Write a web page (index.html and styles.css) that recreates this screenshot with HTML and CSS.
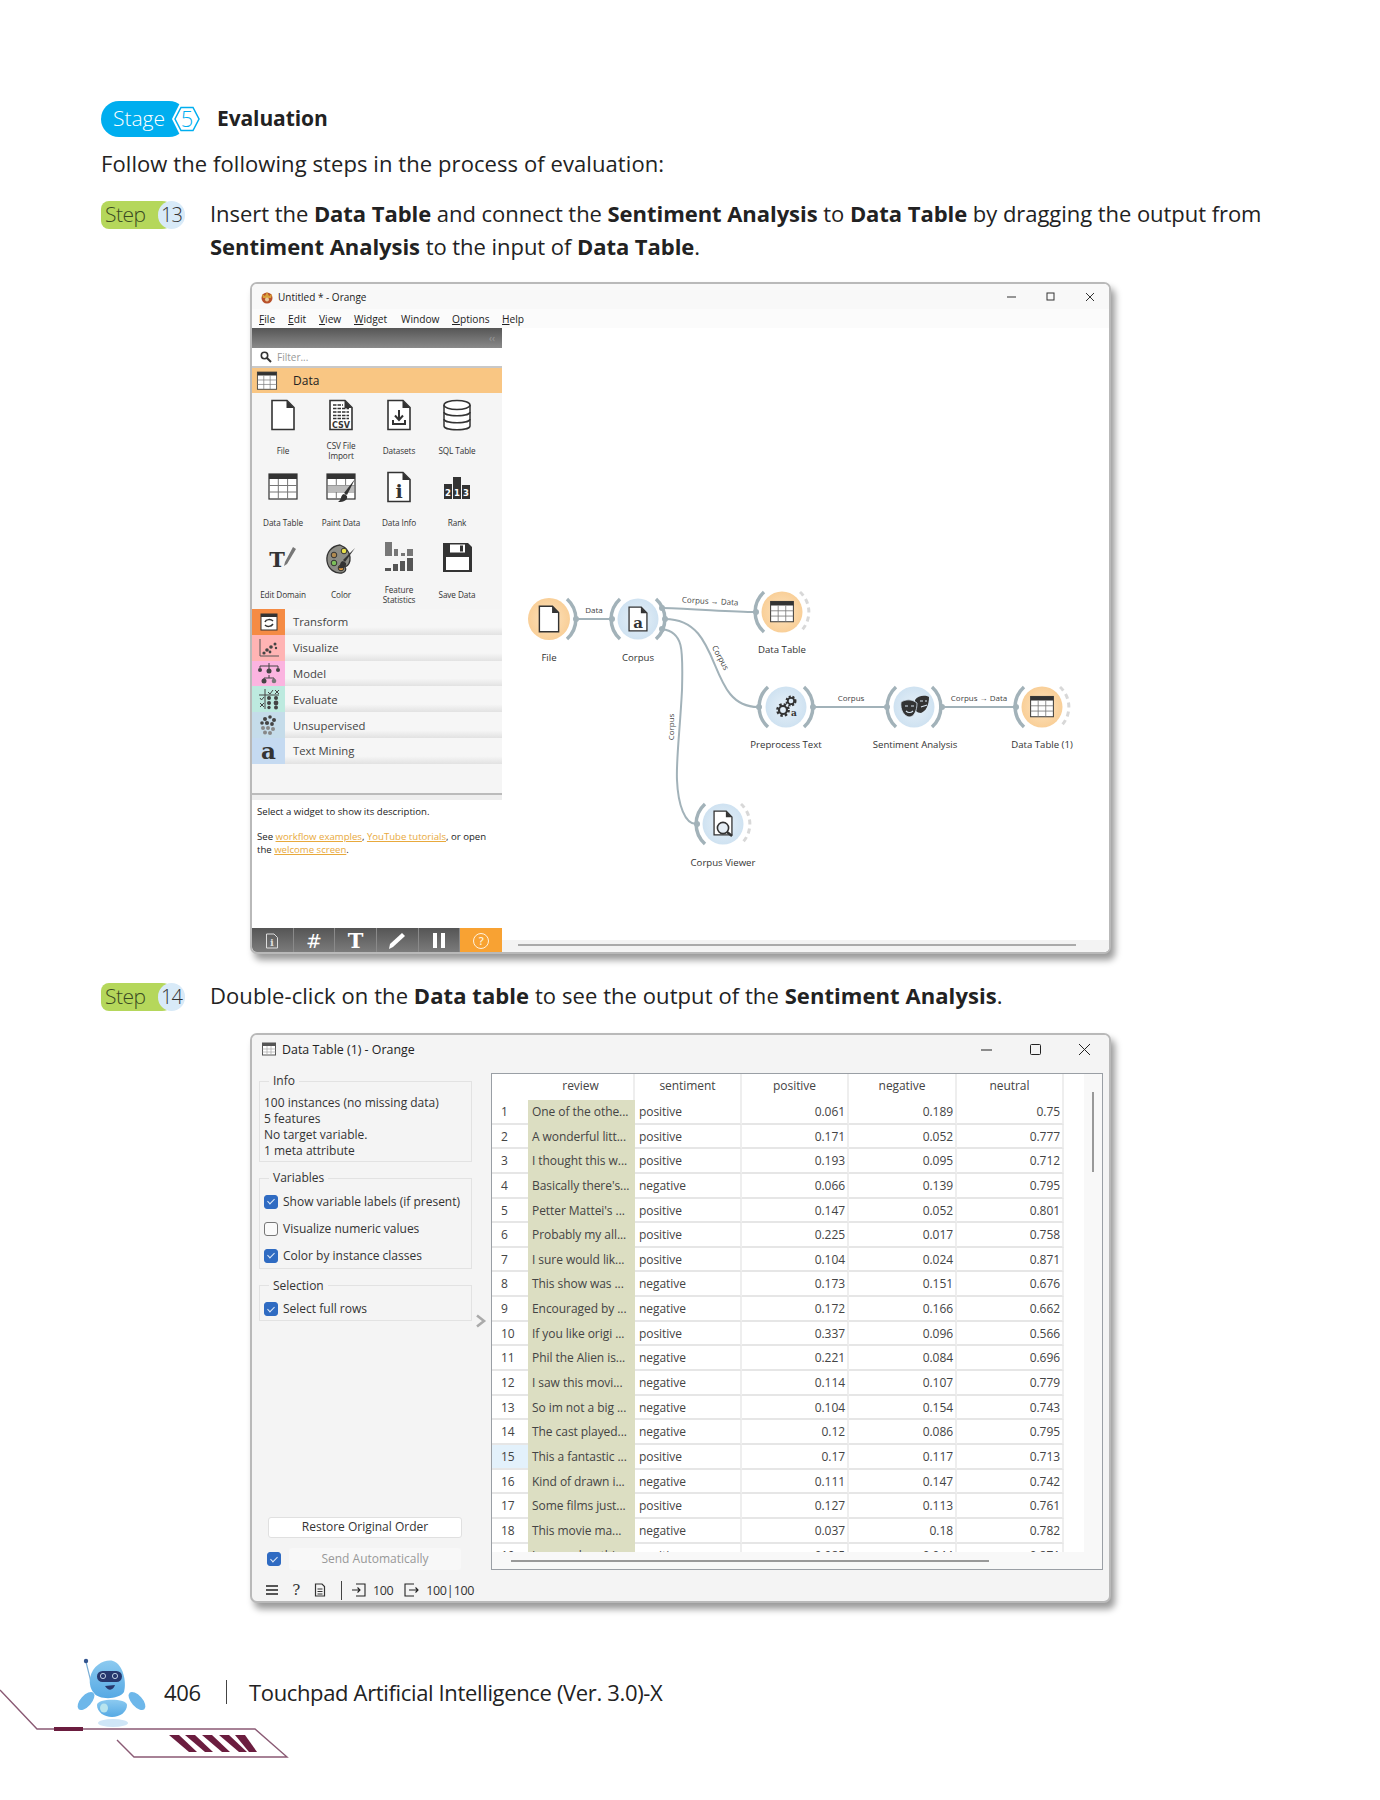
FILE: index.html
```html
<!DOCTYPE html>
<html>
<head>
  <meta charset="UTF-8" />
  <title>Stage 5 Evaluation</title>
  <link rel="stylesheet" href="styles.css">
</head>
<body>

<svg class="defs">
  <symbol id="doc" viewBox="0 0 32 32">
    <path d="M5 1.5H20L27 8.5V30.5H5Z" fill="#fff" stroke="#333" stroke-width="1.6"/>
    <path d="M19.5 1.5V9H27Z" fill="#333"/>
  </symbol>
  <symbol id="table" viewBox="0 0 32 32">
    <rect x="2" y="3" width="28" height="25" fill="#fff" stroke="#333" stroke-width="1.2"/>
    <rect x="2" y="3" width="28" height="5" fill="#333"/>
    <path d="M2 14.5H30M2 21H30M11.3 8V28M20.6 8V28" stroke="#777" stroke-width="1"/>
  </symbol>
</svg>

<div class="page">

  <div class="stage-row">
    <span class="stage-pill">Stage</span>
    <svg class="stage-hex" width="32" height="34" viewBox="0 0 32 34">
      <path d="M8.5 2H23.5L31 17L23.5 32H8.5L1 17Z" fill="#fff"/>
      <path d="M10 5.5H22L28 17L22 28.5H10L4 17Z" fill="#fff" stroke="#00aeef" stroke-width="1.5"/>
      <text x="16" y="24.5" text-anchor="middle" class="hex-num">5</text>
    </svg>
    <span class="stage-title">Evaluation</span>
  </div>

  <p class="lead">Follow the following steps in the process of evaluation:</p>

  <div class="step-row step-one">
    <div class="step-badge"><span class="step-pill">Step</span><span class="step-num">13</span></div>
    <p class="step-text">Insert the <b>Data Table</b> and connect the <b>Sentiment Analysis</b> to <b>Data Table</b> by dragging the output from<br><b>Sentiment Analysis</b> to the input of <b>Data Table</b>.</p>
  </div>

  <!-- orange canvas window -->
  <div class="window win-canvas">
    <div class="titlebar">
      <svg class="app-icon" width="14" height="14" viewBox="0 0 14 14">
        <circle cx="7" cy="8" r="5.5" fill="#b8502a"/>
        <path d="M2 4L5 6L7 2L9 6L12 4L11 8H3Z" fill="#d9a13a"/>
        <circle cx="7" cy="9.5" r="2" fill="#e9c79a"/>
      </svg>
      <span class="title-text">Untitled * - Orange</span>
      <div class="win-btns">
        <svg width="12" height="12" viewBox="0 0 12 12"><path d="M1 6H10" stroke="#333"/></svg>
        <svg width="12" height="12" viewBox="0 0 12 12"><rect x="2" y="2" width="7" height="7" fill="none" stroke="#333"/></svg>
        <svg width="12" height="12" viewBox="0 0 12 12"><path d="M2 2L10 10M10 2L2 10" stroke="#333"/></svg>
      </div>
    </div>
    <div class="menubar">
      <span><u>F</u>ile</span>
      <span><u>E</u>dit</span>
      <span><u>V</u>iew</span>
      <span><u>W</u>idget</span>
      <span>Window</span>
      <span><u>O</u>ptions</span>
      <span><u>H</u>elp</span>
    </div>

    <div class="win-body">
      <div class="sidebar">
        <div class="dock-bar"><span class="dock-arrows">‹‹</span></div>
        <div class="filter">
          <svg width="12" height="12" viewBox="0 0 12 12"><circle cx="4.5" cy="4.5" r="3.2" fill="none" stroke="#333" stroke-width="1.6"/><path d="M7 7L11 11" stroke="#333" stroke-width="2"/></svg>
          <span>Filter...</span>
        </div>
        <div class="cat-open">
          <svg width="22" height="22" viewBox="0 0 32 32"><use href="#table"/></svg>
          <span>Data</span>
        </div>

        <div class="widgets">
          <div class="widget">
            <svg width="32" height="32"><use href="#doc"/></svg>
            <span class="w-label">File</span>
          </div>
          <div class="widget">
            <svg width="32" height="32" viewBox="0 0 32 32">
              <path d="M5 1.5H20L27 8.5V30.5H5Z" fill="#fff" stroke="#333" stroke-width="1.6"/>
              <path d="M19.5 1.5V9H27Z" fill="#333"/>
              <path d="M8 6H18M8 9.5H24M8 13H24M8 16.5H24M8 19.5H24" stroke="#333" stroke-width="1.6" stroke-dasharray="3.5 1"/>
              <text x="16" y="29" text-anchor="middle" class="csv-text">CSV</text>
            </svg>
            <span class="w-label">CSV File<br>Import</span>
          </div>
          <div class="widget">
            <svg width="32" height="32"><use href="#doc"/><path d="M16 11V20M12 16.5L16 21L20 16.5M10 21V25H22V21" fill="none" stroke="#333" stroke-width="2"/></svg>
            <span class="w-label">Datasets</span>
          </div>
          <div class="widget">
            <svg width="32" height="32" viewBox="0 0 32 32">
              <path d="M3 6V27C3 32 29 32 29 27V6" fill="#fff" stroke="#333" stroke-width="1.5"/>
              <ellipse cx="16" cy="6" rx="13" ry="4.5" fill="#fff" stroke="#333" stroke-width="1.5"/>
              <path d="M3 13C3 18 29 18 29 13M3 20C3 25 29 25 29 20" fill="none" stroke="#333" stroke-width="1.5"/>
            </svg>
            <span class="w-label">SQL Table</span>
          </div>

          <div class="widget">
            <svg width="32" height="32"><use href="#table"/></svg>
            <span class="w-label">Data Table</span>
          </div>
          <div class="widget">
            <svg width="32" height="32" viewBox="0 0 32 32">
              <use href="#table" width="32" height="32"/>
              <rect x="3" y="14.5" width="26" height="6.5" fill="#bbb"/>
              <path d="M30 8L22 24L19 22Z" fill="#333"/>
              <path d="M19 23C15 24 17 29 13 31C19 31 23 29 22 25Z" fill="#333"/>
            </svg>
            <span class="w-label">Paint Data</span>
          </div>
          <div class="widget">
            <svg width="32" height="32"><use href="#doc"/><text x="16" y="27" text-anchor="middle" class="info-i">i</text></svg>
            <span class="w-label">Data Info</span>
          </div>
          <div class="widget">
            <svg width="32" height="32" viewBox="0 0 32 32">
              <rect x="3" y="13" width="8" height="15" fill="#333"/>
              <rect x="12" y="6" width="8" height="22" fill="#333"/>
              <rect x="21" y="14" width="8" height="14" fill="#333"/>
              <text x="7" y="25" text-anchor="middle" class="rank-n">2</text>
              <text x="16" y="25" text-anchor="middle" class="rank-n">1</text>
              <text x="25" y="25" text-anchor="middle" class="rank-n">3</text>
            </svg>
            <span class="w-label">Rank</span>
          </div>

          <div class="widget">
            <svg width="32" height="32" viewBox="0 0 32 32">
              <text x="10" y="24" text-anchor="middle" class="edit-t">T</text>
              <path d="M29 6L20 21L17 23L18 19L26 4Z" fill="#777"/>
            </svg>
            <span class="w-label">Edit Domain</span>
          </div>
          <div class="widget">
            <svg width="32" height="32" viewBox="0 0 32 32">
              <path d="M15 2C6 3 1 10 2 18C3 26 10 31 17 30C20 29 22 27 20 24C27 22 28 7 15 2Z" fill="#8d8d86" stroke="#333" stroke-width="1.3"/>
              <circle cx="19" cy="8" r="2.8" fill="#e8e04a" stroke="#333"/>
              <circle cx="9" cy="12" r="2.8" fill="#b08a50" stroke="#333"/>
              <circle cx="9" cy="20" r="2.8" fill="#7cc05a" stroke="#333"/>
              <circle cx="16" cy="25" r="2.8" fill="#e39a3c" stroke="#333"/>
              <path d="M30 5L20 19L18 17Z" fill="#333"/>
              <path d="M18 18C14 19 16 23 13 25C18 26 22 24 21 20Z" fill="#333"/>
            </svg>
            <span class="w-label">Color</span>
          </div>
          <div class="widget">
            <svg width="32" height="32" viewBox="0 0 32 32" class="w-up">
              <path d="M2 0H9V14H2ZM11 7H15V14H11ZM18 11H22V14H18ZM24 7H30V14H24Z" fill="#777"/>
              <path d="M2 29H8V26H2ZM10 29H15V22H10ZM17 29H22V19H17ZM24 29H30V16H24Z" fill="#555"/>
            </svg>
            <span class="w-label">Feature<br>Statistics</span>
          </div>
          <div class="widget">
            <svg width="32" height="32" viewBox="0 0 32 32" class="w-up">
              <path d="M2 1H27L31 5V30H2Z" fill="#333"/>
              <rect x="9" y="2.5" width="15" height="8" fill="#fff"/>
              <rect x="19" y="3.5" width="3" height="6" fill="#333"/>
              <rect x="5" y="15" width="23" height="13" fill="#fff"/>
            </svg>
            <span class="w-label">Save Data</span>
          </div>
        </div>

        <div class="cat">
          <span class="cat-icon ic-transform">
            <svg width="20" height="20" viewBox="0 0 20 20"><rect x="2" y="2" width="16" height="16" fill="#fff" stroke="#333"/><rect x="2" y="2" width="16" height="3" fill="#333"/><path d="M6 10C7 7 12 7 14 9M14 12C12 15 8 15 6 13" fill="none" stroke="#333" stroke-width="1.5"/></svg>
          </span>
          <span class="cat-name">Transform</span>
        </div>
        <div class="cat">
          <span class="cat-icon ic-visualize">
            <svg width="22" height="22" viewBox="0 0 22 22"><path d="M2 2V19H21" fill="none" stroke="#555"/><g fill="#444"><circle cx="6" cy="16" r="1.6"/><circle cx="9" cy="13" r="1.8"/><circle cx="12" cy="15" r="1.4"/><circle cx="13" cy="10" r="1.8"/><circle cx="17" cy="7" r="1.5"/><circle cx="18" cy="11" r="1.2"/></g></svg>
          </span>
          <span class="cat-name">Visualize</span>
        </div>
        <div class="cat">
          <span class="cat-icon ic-model">
            <svg width="24" height="22" viewBox="0 0 24 22"><path d="M3 6V4H21V6M12 1V9M12 13V16M7 19V16H17V19" fill="none" stroke="#444"/><g fill="#444"><circle cx="3" cy="8" r="2"/><circle cx="12" cy="9" r="2.5"/><circle cx="21" cy="8" r="2"/><circle cx="7" cy="19" r="2.5"/><circle cx="17" cy="19" r="2.3" fill="#777"/></g></svg>
          </span>
          <span class="cat-name">Model</span>
        </div>
        <div class="cat">
          <span class="cat-icon ic-evaluate">
            <svg width="22" height="22" viewBox="0 0 22 22"><path d="M1 7H21M7 1V21" stroke="#444"/><path d="M10 4L12 6L15 2M17 2L21 6M21 2L17 6M2 10L3.5 12L6 9M2 15L6 19M6 15L2 19" fill="none" stroke="#444"/><g fill="#444"><circle cx="11" cy="10" r="2"/><circle cx="18" cy="10" r="2"/><circle cx="11" cy="15" r="2"/><circle cx="18" cy="15" r="2.4"/><circle cx="11" cy="19.5" r="1.7"/><circle cx="18" cy="19.5" r="2"/></g></svg>
          </span>
          <span class="cat-name">Evaluate</span>
        </div>
        <div class="cat">
          <span class="cat-icon ic-unsup">
            <svg width="22" height="22" viewBox="0 0 22 22"><g fill="#444"><circle cx="7" cy="5" r="2"/><circle cx="12" cy="3" r="1.8"/><circle cx="16" cy="6" r="2"/><circle cx="4" cy="9" r="1.8"/><circle cx="9" cy="9" r="2.1"/><circle cx="14" cy="10" r="1.9"/></g><g fill="#888"><circle cx="5" cy="14" r="2"/><circle cx="10" cy="14" r="2"/><circle cx="15" cy="15" r="2"/><circle cx="7" cy="18.5" r="2"/><circle cx="12" cy="19" r="2"/></g></svg>
          </span>
          <span class="cat-name">Unsupervised</span>
        </div>
        <div class="cat">
          <span class="cat-icon ic-text"><span class="big-a">a</span></span>
          <span class="cat-name">Text Mining</span>
        </div>

        <div class="side-gap"></div>
        <div class="side-split"></div>
        <div class="desc">
          <p>Select a widget to show its description.</p>
          <p>See <a>workflow examples</a>, <a>YouTube tutorials</a>, or open<br>the <a>welcome screen</a>.</p>
        </div>
        <div class="toolbar">
          <span class="tool"><svg width="14" height="16" viewBox="0 0 14 16"><path d="M1.5 1H9L12.5 4.5V15H1.5Z" fill="none" stroke="#ddd"/><text x="7" y="13" text-anchor="middle" class="tool-i">i</text></svg></span>
          <span class="tool tool-hash">#</span>
          <span class="tool tool-t">T</span>
          <span class="tool"><svg width="20" height="18" viewBox="0 0 20 18"><path d="M15 1L18 4L6 15L2 17L3 12Z" fill="#fff"/></svg></span>
          <span class="tool"><span class="pause"></span><span class="pause"></span></span>
          <span class="tool tool-help"><span class="help-ring">?</span></span>
        </div>
      </div>

      <div class="canvas">
        <svg width="607" height="625" viewBox="502 328 607 625">
          <defs>
            <path id="arc-l" d="M-18 -20A27 27 0 0 0 -18 20" fill="none" stroke="#a2b2b9" stroke-width="3.5"/>
            <path id="arc-r" d="M18 -20A27 27 0 0 1 18 20" fill="none" stroke="#a2b2b9" stroke-width="3.5"/>
            <path id="arc-d" d="M18 -20A27 27 0 0 1 18 20" fill="none" stroke="#d8d8d8" stroke-width="3" stroke-dasharray="5 4"/>
            <radialGradient id="orange-fill"><stop offset="0" stop-color="#fde3be"/><stop offset="1" stop-color="#f9cf98"/></radialGradient>
            <radialGradient id="blue-fill"><stop offset="0" stop-color="#e6f0f8"/><stop offset="1" stop-color="#cfe2f1"/></radialGradient>
          </defs>

          <g fill="none" stroke="#a2b2b9" stroke-width="2">
            <path d="M576 619H612"/>
            <path d="M662 608C700 609 730 612 756 612"/>
            <path d="M665 619C725 619 705 707 758 707"/>
            <path d="M662 629C684 632 683 650 682 690C680 730 676 760 677 780C678 805 685 824 696 824"/>
            <path d="M814 707H887"/>
            <path d="M943 707H1016"/>
          </g>
          <g fill="#a2b2b9">
            <circle cx="576" cy="619" r="3"/><circle cx="612" cy="619" r="3"/>
            <circle cx="662" cy="608" r="3"/><circle cx="665" cy="619" r="3"/><circle cx="662" cy="629" r="3"/>
            <circle cx="756" cy="612" r="3"/><circle cx="759" cy="707" r="3"/><circle cx="813" cy="707" r="3"/>
            <circle cx="887" cy="707" r="3"/><circle cx="942" cy="707" r="3"/><circle cx="1016" cy="707" r="3"/>
            <circle cx="697" cy="824" r="3"/>
          </g>

          <!-- File -->
          <g transform="translate(549 619)">
            <circle r="21" fill="url(#orange-fill)"/><use href="#arc-r"/>
            <svg x="-14" y="-14" width="28" height="28"><use href="#doc"/></svg>
          </g>
          <!-- Corpus -->
          <g transform="translate(638 619)">
            <circle r="20.5" fill="url(#blue-fill)"/><use href="#arc-l"/><use href="#arc-r"/>
            <svg x="-13" y="-13" width="26" height="26"><use href="#doc"/><text x="13" y="21.5" text-anchor="middle" class="node-a">a</text></svg>
          </g>
          <!-- Data Table -->
          <g transform="translate(782 612)">
            <circle r="20.5" fill="url(#orange-fill)"/><use href="#arc-l"/><use href="#arc-d"/>
            <svg x="-13" y="-13" width="26" height="26"><use href="#table"/></svg>
          </g>
          <!-- Preprocess Text -->
          <g transform="translate(786 707)">
            <circle r="20.5" fill="url(#blue-fill)"/><use href="#arc-l"/><use href="#arc-r"/>
            <g fill="none" stroke="#333">
              <circle cx="-3" cy="3" r="5.6" stroke-width="2.6" stroke-dasharray="2.4 2"/>
              <circle cx="-3" cy="3" r="4" stroke-width="2.2"/>
              <circle cx="5" cy="-6" r="4.4" stroke-width="2.2" stroke-dasharray="2 1.6"/>
              <circle cx="5" cy="-6" r="3.2" stroke-width="1.8"/>
            </g>
            <text x="8" y="9" text-anchor="middle" class="gear-a">a</text>
          </g>
          <!-- Sentiment Analysis -->
          <g transform="translate(914 707)">
            <circle r="20.5" fill="url(#blue-fill)"/><use href="#arc-l"/><use href="#arc-r"/>
            <path d="M1 -7C4 -12 12 -12 15 -10C15 -2 12 4 7 6C5 6 3 5 2 4Z" fill="#333"/>
            <path d="M-13 -5C-8 -8 -2 -8 3 -4C3 4 0 10 -5 10C-10 9 -14 3 -13 -5Z" fill="#333" stroke="#d9e7f3" stroke-width="0.8"/>
            <path d="M-9 -1H-6M-3 -1H0M-8 4C-6 6 -3 6 -1 4" fill="none" stroke="#d9e7f3" stroke-width="1.2"/>
            <path d="M6 -6H9M11 -6H13M7 0C9 -1 11 -1 13 -2" fill="none" stroke="#d9e7f3" stroke-width="1.1"/>
          </g>
          <!-- Data Table (1) -->
          <g transform="translate(1042 707)">
            <circle r="20.5" fill="url(#orange-fill)"/><use href="#arc-l"/><use href="#arc-d"/>
            <svg x="-13" y="-13" width="26" height="26"><use href="#table"/></svg>
          </g>
          <!-- Corpus Viewer -->
          <g transform="translate(723 824)">
            <circle r="20.5" fill="url(#blue-fill)"/><use href="#arc-l"/><use href="#arc-d"/>
            <svg x="-13" y="-14" width="26" height="26"><use href="#doc"/></svg>
            <circle cx="0" cy="4" r="5.6" fill="#e6eef5" stroke="#333" stroke-width="1.6"/>
            <path d="M4 8L9 12" stroke="#333" stroke-width="2.4"/>
          </g>

          <g class="node-label" text-anchor="middle">
            <text x="549" y="661">File</text>
            <text x="638" y="661">Corpus</text>
            <text x="782" y="653">Data Table</text>
            <text x="786" y="748">Preprocess Text</text>
            <text x="915" y="748">Sentiment Analysis</text>
            <text x="1042" y="748">Data Table (1)</text>
            <text x="723" y="866">Corpus Viewer</text>
          </g>
          <g class="link-label" text-anchor="middle">
            <text x="594" y="613">Data</text>
            <text transform="translate(710 604) rotate(3)">Corpus → Data</text>
            <text transform="translate(718 659) rotate(62)">Corpus</text>
            <text transform="translate(674 727) rotate(-90)">Corpus</text>
            <text x="851" y="701">Corpus</text>
            <text x="979" y="701">Corpus → Data</text>
          </g>

          <rect x="502" y="940" width="607" height="13" fill="#f3f3f3"/>
          <path d="M518 945H1076" stroke="#aaa" stroke-width="2"/>
        </svg>
      </div>
    </div>
  </div>

  <div class="step-row step-two">
    <div class="step-badge"><span class="step-pill">Step</span><span class="step-num">14</span></div>
    <p class="step-text">Double-click on the <b>Data table</b> to see the output of the <b>Sentiment Analysis</b>.</p>
  </div>

  <!-- data table window -->
  <div class="window win-table">
    <div class="titlebar tb-big">
      <svg class="app-icon" width="14" height="14" viewBox="0 0 14 14"><rect x="0.5" y="1" width="13" height="12" fill="#fff" stroke="#555"/><rect x="0.5" y="1" width="13" height="3" fill="#555"/><path d="M0.5 7H13.5M0.5 10H13.5M5 4V13M9 4V13" stroke="#aaa" stroke-width="0.7"/></svg>
      <span class="title-text">Data Table (1) - Orange</span>
      <div class="win-btns wb-big">
        <svg width="13" height="13" viewBox="0 0 13 13"><path d="M1 7H12" stroke="#222"/></svg>
        <svg width="13" height="13" viewBox="0 0 13 13"><rect x="1.5" y="1.5" width="10" height="10" rx="1" fill="none" stroke="#222"/></svg>
        <svg width="13" height="13" viewBox="0 0 13 13"><path d="M1 1L12 12M12 1L1 12" stroke="#222"/></svg>
      </div>
    </div>

    <div class="dt-body">
      <div class="controls">
        <div class="group g-info">
          <span class="legend">Info</span>
          <div>100 instances (no missing data)</div>
          <div>5 features</div>
          <div>No target variable.</div>
          <div>1 meta attribute</div>
        </div>
        <div class="group g-vars">
          <span class="legend">Variables</span>
          <label class="check"><span class="box on"></span>Show variable labels (if present)</label>
          <label class="check"><span class="box"></span>Visualize numeric values</label>
          <label class="check"><span class="box on"></span>Color by instance classes</label>
        </div>
        <div class="group g-sel">
          <span class="legend">Selection</span>
          <label class="check"><span class="box on"></span>Select full rows</label>
        </div>
        <div class="ctl-gap"></div>
        <div class="btn-restore">Restore Original Order</div>
        <div class="send-row">
          <span class="box on"></span>
          <div class="btn-send">Send Automatically</div>
        </div>
      </div>

      <svg class="chevron" width="12" height="14" viewBox="0 0 12 14"><path d="M2 1.5L9 7L2 12.5" fill="none" stroke="#aaa" stroke-width="2.6"/></svg>

      <div class="tbl-frame">
        <div class="tbl-scroll">
          <div class="row row-head"><span class="c-n"></span><span>review</span><span>sentiment</span><span>positive</span><span>negative</span><span>neutral</span></div>
          <div class="row"><span class="c-n">1</span><span class="c-r">One of the othe...</span><span class="c-s">positive</span><span class="c-v">0.061</span><span class="c-v">0.189</span><span class="c-v">0.75</span></div>
          <div class="row"><span class="c-n">2</span><span class="c-r">A wonderful litt...</span><span class="c-s">positive</span><span class="c-v">0.171</span><span class="c-v">0.052</span><span class="c-v">0.777</span></div>
          <div class="row"><span class="c-n">3</span><span class="c-r">I thought this w...</span><span class="c-s">positive</span><span class="c-v">0.193</span><span class="c-v">0.095</span><span class="c-v">0.712</span></div>
          <div class="row"><span class="c-n">4</span><span class="c-r">Basically there's...</span><span class="c-s">negative</span><span class="c-v">0.066</span><span class="c-v">0.139</span><span class="c-v">0.795</span></div>
          <div class="row"><span class="c-n">5</span><span class="c-r">Petter Mattei's ...</span><span class="c-s">positive</span><span class="c-v">0.147</span><span class="c-v">0.052</span><span class="c-v">0.801</span></div>
          <div class="row"><span class="c-n">6</span><span class="c-r">Probably my all...</span><span class="c-s">positive</span><span class="c-v">0.225</span><span class="c-v">0.017</span><span class="c-v">0.758</span></div>
          <div class="row"><span class="c-n">7</span><span class="c-r">I sure would lik...</span><span class="c-s">positive</span><span class="c-v">0.104</span><span class="c-v">0.024</span><span class="c-v">0.871</span></div>
          <div class="row"><span class="c-n">8</span><span class="c-r">This show was ...</span><span class="c-s">negative</span><span class="c-v">0.173</span><span class="c-v">0.151</span><span class="c-v">0.676</span></div>
          <div class="row"><span class="c-n">9</span><span class="c-r">Encouraged by ...</span><span class="c-s">negative</span><span class="c-v">0.172</span><span class="c-v">0.166</span><span class="c-v">0.662</span></div>
          <div class="row"><span class="c-n">10</span><span class="c-r">If you like origi ...</span><span class="c-s">positive</span><span class="c-v">0.337</span><span class="c-v">0.096</span><span class="c-v">0.566</span></div>
          <div class="row"><span class="c-n">11</span><span class="c-r">Phil the Alien is...</span><span class="c-s">negative</span><span class="c-v">0.221</span><span class="c-v">0.084</span><span class="c-v">0.696</span></div>
          <div class="row"><span class="c-n">12</span><span class="c-r">I saw this movi...</span><span class="c-s">negative</span><span class="c-v">0.114</span><span class="c-v">0.107</span><span class="c-v">0.779</span></div>
          <div class="row"><span class="c-n">13</span><span class="c-r">So im not a big ...</span><span class="c-s">negative</span><span class="c-v">0.104</span><span class="c-v">0.154</span><span class="c-v">0.743</span></div>
          <div class="row"><span class="c-n">14</span><span class="c-r">The cast played...</span><span class="c-s">negative</span><span class="c-v">0.12</span><span class="c-v">0.086</span><span class="c-v">0.795</span></div>
          <div class="row row-hl"><span class="c-n">15</span><span class="c-r">This a fantastic ...</span><span class="c-s">positive</span><span class="c-v">0.17</span><span class="c-v">0.117</span><span class="c-v">0.713</span></div>
          <div class="row"><span class="c-n">16</span><span class="c-r">Kind of drawn i...</span><span class="c-s">negative</span><span class="c-v">0.111</span><span class="c-v">0.147</span><span class="c-v">0.742</span></div>
          <div class="row"><span class="c-n">17</span><span class="c-r">Some films just...</span><span class="c-s">positive</span><span class="c-v">0.127</span><span class="c-v">0.113</span><span class="c-v">0.761</span></div>
          <div class="row"><span class="c-n">18</span><span class="c-r">This movie ma...</span><span class="c-s">negative</span><span class="c-v">0.037</span><span class="c-v">0.18</span><span class="c-v">0.782</span></div>
          <div class="row"><span class="c-n">19</span><span class="c-r">I remember thi...</span><span class="c-s">positive</span><span class="c-v">0.085</span><span class="c-v">0.044</span><span class="c-v">0.871</span></div>
        </div>
        <span class="vscroll"></span>
        <span class="hscroll"></span>
      </div>
    </div>

    <div class="statusbar">
      <svg width="14" height="12" viewBox="0 0 14 12"><path d="M1 2H13M1 6H13M1 10H13" stroke="#222" stroke-width="1.6"/></svg>
      <span class="st-q">?</span>
      <svg width="12" height="14" viewBox="0 0 12 14"><path d="M1.5 1H8L10.5 3.5V13H1.5Z" fill="none" stroke="#333" stroke-width="1.2"/><path d="M3.5 6H8.5M3.5 8.5H8.5M3.5 11H8.5" stroke="#333"/></svg>
      <span class="st-sep"></span>
      <svg width="14" height="14" viewBox="0 0 14 14"><path d="M4 1H13V13H4M0 7H8M5.5 4.5L8 7L5.5 9.5" fill="none" stroke="#222" stroke-width="1.1"/></svg>
      <span class="st-num">100</span>
      <svg class="st-out" width="15" height="14" viewBox="0 0 15 14"><path d="M10 1H1V13H10M5 7H14M11.5 4.5L14 7L11.5 9.5" fill="none" stroke="#222" stroke-width="1.1"/></svg>
      <span class="st-num st-pair">100 | 100</span>
    </div>
  </div>

  <div class="footer">
    <svg class="footer-art" width="300" height="110" viewBox="0 0 300 110">
      <defs>
        <linearGradient id="bot" x1="0" y1="0" x2="0" y2="1"><stop offset="0" stop-color="#8ccaf0"/><stop offset="1" stop-color="#55a9e4"/></linearGradient>
      </defs>
      <path d="M0 40L37 79H255L287 107H134L117 90" fill="none" stroke="#8a5a74" stroke-width="1.4"/>
      <rect x="54" y="77" width="29" height="4" fill="#6b1d3f"/>
      <g fill="#6b1d3f">
        <path d="M169 85H179L197 102H189Z"/>
        <path d="M185 85H195L213 102H205Z"/>
        <path d="M202 85H212L230 102H222Z"/>
        <path d="M219 85H229L247 102H239Z"/>
        <path d="M235 85H245L257 102H249Z"/>
      </g>
      <path d="M86 12L91 32" stroke="#7aaed6" stroke-width="1.2"/>
      <circle cx="86" cy="11" r="2.2" fill="#33558f"/>
      <ellipse cx="113" cy="73" rx="15" ry="4" fill="#cfe6f7"/>
      <path d="M90 28C93 14 106 9 113 11C123 14 127 32 124 42C119 50 98 50 94 43C91 40 89 34 90 28Z" fill="url(#bot)"/>
      <rect x="97" y="21" width="25" height="11" rx="5.5" fill="#27386e"/>
      <circle cx="103" cy="26" r="2.6" fill="none" stroke="#cde" stroke-width="0.9"/>
      <circle cx="115" cy="26" r="2.6" fill="none" stroke="#cde" stroke-width="0.9"/>
      <path d="M105 36C108 41 113 41 115 35Z" fill="#27386e"/>
      <path d="M97 55C97 48 127 48 127 55C127 62 120 67 112 67C104 67 97 62 97 55Z" fill="url(#bot)"/>
      <ellipse cx="104" cy="58" rx="4" ry="4.5" fill="#b8e4ee"/>
      <ellipse cx="86" cy="51" rx="5.5" ry="11" transform="rotate(42 86 51)" fill="#6db7ea"/>
      <ellipse cx="137" cy="51" rx="5.5" ry="11" transform="rotate(-42 137 51)" fill="#6db7ea"/>
    </svg>
    <div class="footer-line">
      <span class="page-no">406</span>
      <span class="foot-sep"></span>
      <span class="book">Touchpad Artificial Intelligence (Ver. 3.0)-X</span>
    </div>
  </div>

</div>

</body>
</html>
```

FILE: styles.css
```css
html {
  background: #fff;
}

body {
  margin: 0;
  font-family: "Open Sans", "Noto Sans", sans-serif;
  color: #222;
}

.defs {
  display: none;
}

.page {
  width: 1380px;
  box-sizing: border-box;
  padding: 101px 0 0 101px;
}

/* heading */
.stage-row {
  display: flex;
  align-items: center;
  height: 36px;
}

.stage-pill {
  width: 86px;
  height: 36px;
  box-sizing: border-box;
  padding: 0 0 2px 12px;
  border-radius: 18px;
  background: #00aeef;
  color: #fff;
  font-size: 21px;
  font-weight: 300;
  line-height: 34px;
}

.stage-hex {
  margin-left: -16px;
}

.hex-num {
  font-size: 22px;
  font-weight: 300;
  fill: #00aeef;
}

.stage-title {
  margin: 0 0 2px 14px;
  font-size: 21px;
  font-weight: 700;
  letter-spacing: -0.1px;
}

.lead {
  margin: 11px 0 0;
  font-size: 22px;
  line-height: 30px;
  letter-spacing: 0.08px;
}

.step-row {
  display: flex;
  margin-top: 20px;
}

.step-one {
  margin-top: 21px;
}

.step-two {
  margin-top: 27px;
}

.step-badge {
  display: flex;
  flex: none;
  width: 109px;
  height: 28px;
  margin-top: 2px;
}

.step-pill {
  width: 75px;
  height: 28px;
  box-sizing: border-box;
  padding-left: 4px;
  border-radius: 8px 14px 14px 8px;
  background: #b5d75b;
  color: #3a4a22;
  font-size: 21px;
  font-weight: 300;
  line-height: 26px;
  letter-spacing: -0.5px;
}

.step-num {
  width: 27px;
  height: 28px;
  margin-left: -18px;
  border-radius: 14px;
  background: #d8eaf8;
  color: #333;
  font-size: 20px;
  font-weight: 300;
  line-height: 27px;
  text-align: center;
  letter-spacing: -1px;
}

.step-text {
  margin: -2px 0 0;
  font-size: 22px;
  line-height: 33px;
  letter-spacing: -0.05px;
  white-space: nowrap;
}

.step-two .step-text {
  letter-spacing: 0.07px;
}

/* shared window chrome */
.window {
  width: 861px;
  box-sizing: border-box;
  margin-left: 149px;
  border: 2px solid #b9b9b9;
  border-radius: 7px;
  background: #fff;
  box-shadow: 4px 6px 7px rgba(0, 0, 0, 0.4);
  overflow: hidden;
}

.win-canvas {
  height: 672px;
  margin-top: 19px;
}

.win-table {
  height: 570px;
  margin-top: 21px;
  background: #f4f4f4;
}

.titlebar {
  display: flex;
  align-items: center;
  height: 25px;
  padding-left: 8px;
  background: #f8f8f8;
  font-size: 10px;
}

.app-icon {
  margin-right: 4px;
}

.win-btns {
  display: flex;
  gap: 27px;
  margin-left: auto;
  margin-right: 13px;
}

.tb-big {
  box-sizing: border-box;
  height: 30px;
  padding: 0 0 2px 10px;
  background: #f4f4f4;
  font-size: 12.4px;
}

.tb-big .app-icon {
  margin-right: 6px;
}

.wb-big {
  gap: 36px;
  margin-right: 18px;
}

.menubar {
  display: flex;
  align-items: center;
  height: 19px;
  padding-left: 7px;
  background: #fbfbfb;
  font-size: 10.2px;
}

.menubar span:nth-child(1) { width: 29px; }
.menubar span:nth-child(2) { width: 31px; }
.menubar span:nth-child(3) { width: 35px; }
.menubar span:nth-child(4) { width: 47px; }
.menubar span:nth-child(5) { width: 51px; }
.menubar span:nth-child(6) { width: 50px; }

.win-body {
  display: flex;
  height: 625px;
}

/* orange sidebar */
.sidebar {
  display: flex;
  flex: none;
  flex-direction: column;
  width: 250px;
  height: 625px;
  background: #f5f5f5;
}

.dock-bar {
  display: flex;
  align-items: center;
  justify-content: flex-end;
  flex: none;
  height: 20px;
  padding-right: 7px;
  background: linear-gradient(#565656, #8a8a8a);
}

.dock-arrows {
  color: #999;
  font-size: 10px;
}

.filter {
  display: flex;
  align-items: center;
  flex: none;
  gap: 5px;
  height: 18px;
  padding-left: 8px;
  background: #fff;
  border-bottom: 2px solid #c8c8c8;
  color: #999;
  font-size: 10px;
}

.cat-open {
  display: flex;
  align-items: center;
  flex: none;
  height: 25px;
  padding-left: 4px;
  background: #f9c683;
  font-size: 12px;
}

.cat-open span {
  margin-left: 15px;
}

.widgets {
  display: grid;
  flex: none;
  grid-template-columns: repeat(4, 58px);
  grid-auto-rows: 72px;
  height: 216px;
  padding-left: 2px;
}

.widget {
  display: flex;
  align-items: center;
  flex-direction: column;
  padding-top: 6px;
}

.w-up {
  margin-top: -1px;
  margin-bottom: 1px;
}

.w-label {
  display: flex;
  align-items: center;
  height: 22px;
  margin-top: 9px;
  color: #333;
  font-size: 8.2px;
  line-height: 10.5px;
  text-align: center;
  letter-spacing: -0.1px;
}

.csv-text {
  font-family: "DejaVu Sans", sans-serif;
  font-size: 8px;
  font-weight: 700;
  fill: #333;
}

.info-i {
  font-family: "DejaVu Serif", serif;
  font-size: 19px;
  font-weight: 700;
  fill: #333;
}

.rank-n {
  font-family: "DejaVu Sans", sans-serif;
  font-size: 8.5px;
  font-weight: 700;
  fill: #fff;
}

.edit-t {
  font-family: "DejaVu Serif", serif;
  font-size: 21px;
  font-weight: 700;
  fill: #333;
}

.cat {
  display: flex;
  align-items: center;
  flex: none;
  height: 25.8px;
  background: linear-gradient(#f6f6f6 70%, #e2e2e2);
  font-size: 11.3px;
  color: #444;
}

.cat-icon {
  display: flex;
  align-items: center;
  justify-content: center;
  width: 33px;
  height: 100%;
  margin-right: 8px;
}

.ic-transform { background: #f58b44; }
.ic-visualize { background: #ffb4b4; }
.ic-model { background: #fbb4e0; }
.ic-evaluate { background: #bdeadf; }
.ic-unsup { background: #c5dcea; }
.ic-text { background: #c5daf1; }

.big-a {
  font-family: "DejaVu Serif", serif;
  font-size: 23px;
  font-weight: 700;
  line-height: 24px;
  color: #333;
}

.side-gap {
  flex: 1;
}

.side-split {
  flex: none;
  height: 5px;
  border-top: 2px solid #bbb;
  background: #eee;
}

.desc {
  flex: none;
  box-sizing: border-box;
  height: 128px;
  padding: 5px 5px;
  background: #fff;
  font-size: 9.6px;
  line-height: 13px;
}

.desc p {
  margin: 0 0 12px;
}

.desc a {
  color: #e8a93c;
  text-decoration: underline;
}

.toolbar {
  display: flex;
  flex: none;
  height: 25px;
  background: linear-gradient(#555, #7d7d7d);
  border-radius: 0 0 0 5px;
}

.tool {
  display: flex;
  align-items: center;
  justify-content: center;
  gap: 4px;
  width: 41.7px;
  border-right: 1px solid #8a8a8a;
  box-sizing: border-box;
  color: #fff;
}

.tool-i {
  font-family: "DejaVu Serif", serif;
  font-size: 10px;
  font-weight: 700;
  fill: #ddd;
}

.tool-hash {
  font-family: "DejaVu Sans", sans-serif;
  font-size: 19px;
}

.tool-t {
  font-family: "DejaVu Serif", serif;
  font-size: 21px;
  font-weight: 700;
}

.pause {
  width: 4px;
  height: 15px;
  background: #fff;
}

.tool-help {
  background: #f8a233;
  border-right: 0;
}

.help-ring {
  width: 14px;
  height: 14px;
  border: 1.5px solid #fff3df;
  border-radius: 50%;
  color: #fff3df;
  font-size: 11px;
  font-weight: 600;
  line-height: 14px;
  text-align: center;
}

/* workflow canvas */
.canvas {
  flex: 1;
  background: #fff;
}

.canvas svg {
  display: block;
}

.node-label {
  font-size: 9.6px;
  fill: #333;
}

.link-label {
  font-size: 8px;
  fill: #444;
}

.node-a {
  font-family: "DejaVu Serif", serif;
  font-size: 15px;
  font-weight: 700;
  fill: #333;
}

.gear-a {
  font-family: "DejaVu Serif", serif;
  font-size: 9px;
  font-weight: 700;
  fill: #333;
}

/* data table window */
.dt-body {
  display: flex;
  height: 505px;
}

.controls {
  display: flex;
  flex: none;
  flex-direction: column;
  width: 213px;
  margin-left: 7px;
  font-size: 12px;
  color: #333;
}

.group {
  box-sizing: border-box;
  flex: none;
  margin-top: 16px;
  padding: 0 4px;
  border: 1px solid #e2e2e2;
  line-height: 16px;
}

.g-info { height: 81px; }
.g-vars { height: 91px; }
.g-sel { height: 36px; }

.legend {
  display: table;
  margin: -9px 0 6px 5px;
  padding: 0 4px;
  background: #f4f4f4;
}

.check {
  display: flex;
  align-items: center;
  height: 27px;
}

.g-vars .legend { margin-bottom: 2px; }
.g-sel .legend { margin: -8px 0 5px 5px; }
.g-sel .check { height: 20px; }

.box {
  flex: none;
  width: 12px;
  height: 12px;
  position: relative;
  margin-right: 5px;
  border: 1px solid #777;
  border-radius: 3px;
  background: #fafafa;
}

.box.on {
  border-color: #2f6bc2;
  background: #2f6bc2;
}

.box.on::after {
  content: '';
  position: absolute;
  left: 3.5px;
  top: 1.5px;
  width: 3px;
  height: 6px;
  border: solid #dfeaf8;
  border-width: 0 1px 1px 0;
  transform: rotate(45deg);
}

.ctl-gap {
  flex: 1;
}

.btn-restore {
  flex: none;
  box-sizing: border-box;
  width: 194px;
  height: 21px;
  margin-left: 9px;
  border: 1px solid #e0e0e0;
  border-radius: 3px;
  background: #fff;
  line-height: 18px;
  text-align: center;
}

.send-row {
  display: flex;
  align-items: center;
  flex: none;
  margin: 10px 0 0 8px;
}

.send-row .box {
  margin-right: 8px;
}

.btn-send {
  width: 172px;
  height: 22px;
  border-radius: 3px;
  background: #f8f8f8;
  color: #999;
  line-height: 22px;
  text-align: center;
}

.chevron {
  flex: none;
  margin: 249px 4px 0 3px;
}

.tbl-frame {
  position: relative;
  flex: none;
  box-sizing: border-box;
  width: 612px;
  height: 497px;
  margin-top: 8px;
  border: 1px solid #9a9fa5;
  background: #f8f8f8;
}

.tbl-scroll {
  width: 592px;
  height: 478px;
  background: #fff;
  overflow: hidden;
  font-size: 12px;
  letter-spacing: -0.06px;
  color: #444;
}

.row {
  display: grid;
  grid-template-columns: 36px 107px 107px 107px 108px 107px 20px;
  height: 24.65px;
  line-height: 24px;
  white-space: nowrap;
}

.row span {
  box-sizing: border-box;
  overflow: hidden;
  border-right: 2px solid #eee;
  border-bottom: 2px solid #e6e6e6;
}

.row-head {
  height: 26px;
}

.row-head span {
  border-bottom: 0;
  text-align: center;
}

.c-n {
  padding-left: 9px;
}

.row .c-n {
  border-right: 0;
}

.row-hl .c-n {
  background: #e3f1fb;
}

.row .c-r {
  padding-left: 4px;
  background: #dcdec2;
  border-right: 0;
  border-bottom: 0;
}

.c-s {
  padding-left: 4px;
}

.c-v {
  padding-right: 2px;
  text-align: right;
}

.vscroll {
  position: absolute;
  top: 18px;
  left: 600px;
  width: 2px;
  height: 80px;
  background: #999;
}

.hscroll {
  position: absolute;
  top: 486px;
  left: 19px;
  width: 478px;
  height: 2px;
  background: #999;
}

.statusbar {
  display: flex;
  align-items: center;
  height: 26px;
  padding: 7px 0 0 13px;
  font-size: 12.5px;
  letter-spacing: -0.4px;
  color: #333;
}

.statusbar svg {
  flex: none;
}

.st-q {
  width: 12px;
  margin-left: 11px;
  font-family: "DejaVu Serif", serif;
  font-size: 15px;
  text-align: center;
}

.statusbar svg:nth-of-type(2) {
  margin-left: 12px;
}

.st-sep {
  width: 1px;
  height: 19px;
  margin: 0 10px 0 15px;
  background: #444;
}

.st-num {
  margin-left: 7px;
}

.st-pair {
  word-spacing: -2.5px;
}

.st-out {
  margin-left: 11px;
}

/* footer */
.footer {
  position: relative;
  height: 110px;
  margin: 47px 0 0 -101px;
}

.footer-art {
  position: absolute;
  top: 0;
  left: 0;
}

.footer-line {
  display: flex;
  align-items: center;
  position: relative;
  height: 30px;
  padding: 27px 0 0 164px;
  font-size: 22px;
  letter-spacing: -0.35px;
}

.page-no {
  width: 62px;
}

.foot-sep {
  width: 1px;
  height: 24px;
  margin-right: 22px;
  background: #444;
}
```
